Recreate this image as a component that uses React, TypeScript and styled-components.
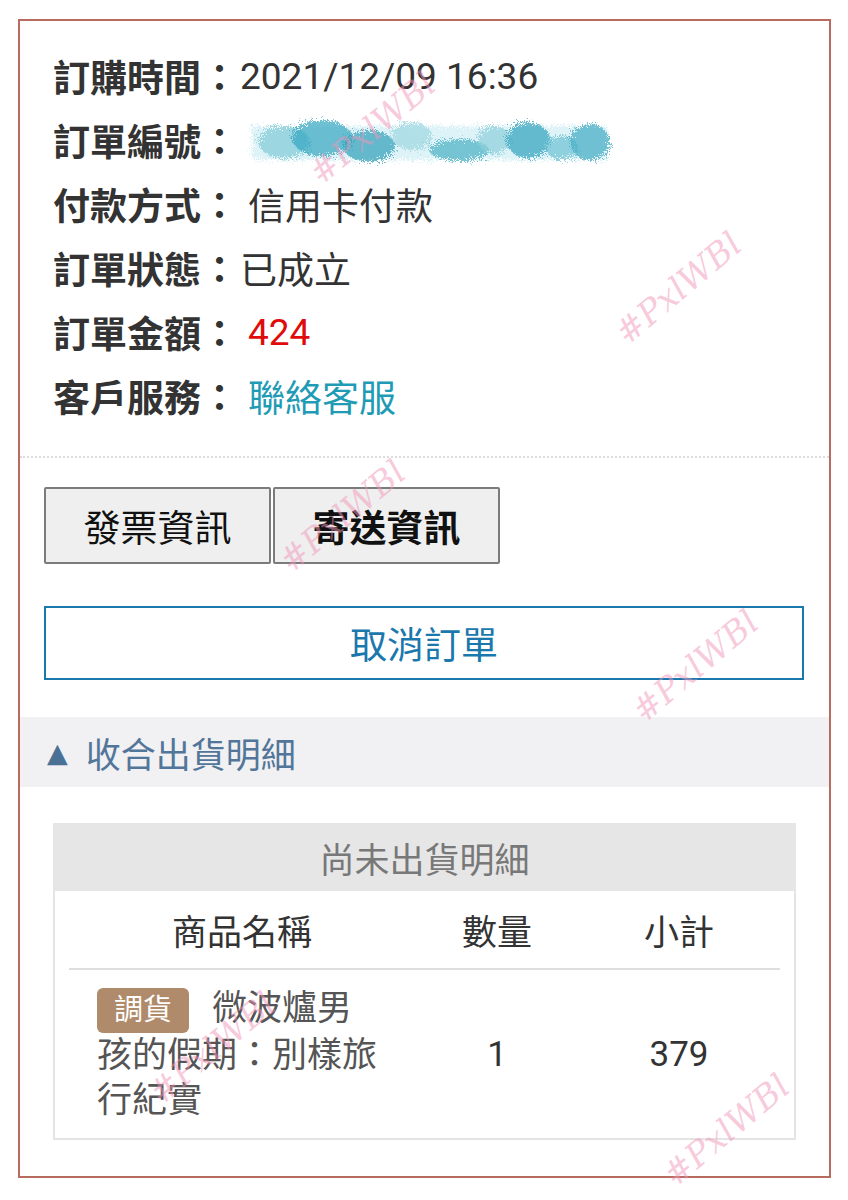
import React, { FC } from "react";
import styled, { createGlobalStyle } from "styled-components";

const GlobalStyle = createGlobalStyle`
  html, body {
    margin: 0;
    padding: 0;
    background: #ffffff;
  }
  body {
    font-family: "Roboto", "Noto Sans CJK TC", sans-serif;
    color: #333;
  }
`;

const cjk = `"Roboto", "Noto Sans CJK TC", sans-serif`;

interface InfoRow {
  label: string;
  value?: string;
  gap?: boolean;
  tone?: "plain" | "red" | "link";
  redacted?: boolean;
}

const rows: InfoRow[] = [
  { label: "訂購時間", value: "2021/12/09 16:36" },
  { label: "訂單編號", redacted: true, gap: true },
  { label: "付款方式", value: "信用卡付款", gap: true },
  { label: "訂單狀態", value: "已成立" },
  { label: "訂單金額", value: "424", gap: true, tone: "red" },
  { label: "客戶服務", value: "聯絡客服", gap: true, tone: "link" },
];

// watermark spots, page coordinates (centre)
const marks = [
  { x: 372, y: 128 },
  { x: 678, y: 288 },
  { x: 342, y: 516 },
  { x: 695, y: 666 },
  { x: 212, y: 1048 },
  { x: 726, y: 1130 },
];

// scribbled-over order number
const blobs = [
  { cx: 40, cy: 28, rx: 26, ry: 16, c: "#7fcad8" },
  { cx: 78, cy: 24, rx: 30, ry: 18, c: "#35a7c0" },
  { cx: 125, cy: 32, rx: 26, ry: 16, c: "#2e9fb9" },
  { cx: 168, cy: 22, rx: 20, ry: 14, c: "#9ed7e2" },
  { cx: 215, cy: 36, rx: 30, ry: 11, c: "#48b0c5" },
  { cx: 250, cy: 26, rx: 16, ry: 14, c: "#8dd0dd" },
  { cx: 284, cy: 26, rx: 22, ry: 18, c: "#2fa3bd" },
  { cx: 318, cy: 34, rx: 16, ry: 12, c: "#6cc2d3" },
  { cx: 346, cy: 28, rx: 20, ry: 18, c: "#3eabc3" },
];

const Redacted: FC = () => (
  <svg width="372" height="56" viewBox="0 0 372 56">
    <defs>
      <filter id="scrub" x="-10%" y="-40%" width="120%" height="180%">
        <feTurbulence type="fractalNoise" baseFrequency="1.4" numOctaves="3" result="n" />
        <feDisplacementMap in="SourceGraphic" in2="n" scale="16" />
      </filter>
    </defs>
    <g filter="url(#scrub)">
      <rect x="8" y="12" width="356" height="34" fill="#d6f0f5" opacity="0.8" />
      {blobs.map((b, i) => (
        <ellipse key={i} cx={b.cx} cy={b.cy} rx={b.rx} ry={b.ry} fill={b.c} opacity="0.7" />
      ))}
    </g>
  </svg>
);

export default function App() {
  return (
    <>
      <GlobalStyle />
      <Page>
        <Card>
          <InfoList>
            {rows.map((r) => (
              <Row key={r.label}>
                <Label>{r.label}：</Label>
                {r.redacted ? (
                  <RedactWrap $gap={!!r.gap}>
                    <Redacted />
                  </RedactWrap>
                ) : (
                  <Value $gap={!!r.gap} $tone={r.tone || "plain"}>
                    {r.value}
                  </Value>
                )}
              </Row>
            ))}
          </InfoList>

          <Actions>
            <TabRow>
              <TabButton>發票資訊</TabButton>
              <TabButton $bold>寄送資訊</TabButton>
            </TabRow>
            <CancelButton>取消訂單</CancelButton>
          </Actions>

          <CollapseBar>
            <Arrow>▲</Arrow>
            <span>收合出貨明細</span>
          </CollapseBar>

          <ShipTable>
            <ShipTitle>尚未出貨明細</ShipTitle>
            <ColHead>
              <Cell>商品名稱</Cell>
              <Cell>數量</Cell>
              <Cell>小計</Cell>
            </ColHead>
            <ItemRow>
              <NameCell>
                <NameText>
                  <Badge>調貨</Badge>
                  微波爐男孩的假期：別樣旅行紀實
                </NameText>
              </NameCell>
              <Cell>1</Cell>
              <Cell>379</Cell>
            </ItemRow>
          </ShipTable>
        </Card>

        {marks.map((m, i) => (
          <Watermark key={i} style={{ left: m.x, top: m.y }} aria-hidden="true">
            #PxlWBl
          </Watermark>
        ))}
      </Page>
    </>
  );
}

const Page = styled.div`
  position: relative;
  width: 848px;
  height: 1200px;
  padding: 19px 17px 0 18px;
  box-sizing: border-box;
`;

const Card = styled.div`
  border: 2px solid #b86b5f;
  background: #fff;
  padding: 0 0 36px;
  display: flex;
  flex-direction: column;
`;

const InfoList = styled.div`
  padding: 23px 0 28px 33px;
  border-bottom: 2px dotted #dcdcdc;
  display: flex;
  flex-direction: column;
`;

const Row = styled.div`
  display: flex;
  align-items: center;
  height: 64px;
  font-family: ${cjk};
  font-size: 37px;
`;

const Label = styled.span`
  font-weight: 700;
  color: #333;
`;

const Value = styled.span<{ $gap: boolean; $tone: "plain" | "red" | "link" }>`
  margin-left: ${(p) => (p.$gap ? "10px" : "2px")};
  color: ${(p) => (p.$tone === "red" ? "#e00b0b" : p.$tone === "link" ? "#1f9bb6" : "#333")};
`;

const RedactWrap = styled.span<{ $gap: boolean }>`
  display: flex;
  margin-left: ${(p) => (p.$gap ? "6px" : "0")};
  margin-top: 4px;
`;

const Actions = styled.div`
  padding: 29px 24px 0;
  display: flex;
  flex-direction: column;
  gap: 42px;
`;

const TabRow = styled.div`
  display: flex;
  gap: 2px;
`;

const TabButton = styled.button<{ $bold?: boolean }>`
  width: 227px;
  height: 77px;
  background: #efefef;
  border: 2px solid #7b7b7b;
  border-radius: 2px;
  font-family: ${cjk};
  font-size: 37px;
  font-weight: ${(p) => (p.$bold ? 700 : 400)};
  color: #111;
  padding: 0;
`;

const CancelButton = styled.button`
  width: 760px;
  height: 74px;
  background: #fff;
  border: 2px solid #1b78ad;
  font-family: ${cjk};
  font-size: 37px;
  color: #1b78ad;
  padding: 0;
`;

const CollapseBar = styled.div`
  margin-top: 37px;
  height: 70px;
  background: #f1f0f2;
  display: flex;
  align-items: center;
  padding-left: 27px;
  font-family: ${cjk};
  font-size: 35px;
  color: #52769a;
`;

const Arrow = styled.span`
  font-size: 27px;
  margin-right: 18px;
  color: #4a7096;
  font-family: "DejaVu Sans", sans-serif;
`;

const ShipTable = styled.div`
  margin: 36px 33px 0;
  border: 2px solid #e4e4e4;
  border-top: none;
  font-family: ${cjk};
  font-size: 35px;
`;

const ShipTitle = styled.div`
  height: 68px;
  margin: 0 -2px;
  background: #e6e6e6;
  color: #787878;
  display: flex;
  align-items: center;
  justify-content: center;
`;

const grid = `
  display: grid;
  grid-template-columns: 346px 164px 200px;
  margin: 0 14px;
`;

const ColHead = styled.div`
  ${grid};
  height: 77px;
  align-items: center;
  color: #333;
  border-bottom: 2px solid #dedede;
`;

const ItemRow = styled.div`
  ${grid};
  padding: 16px 0 15px;
  align-items: center;
  color: #333;
`;

const Cell = styled.div`
  text-align: center;
`;

const NameCell = styled.div`
  padding-left: 28px;
`;

const NameText = styled.div`
  width: 286px;
  line-height: 45px;
  color: #555;
`;

const Badge = styled.span`
  display: inline-block;
  vertical-align: top;
  margin-top: 2px;
  height: 45px;
  line-height: 45px;
  padding: 0 17px;
  margin-right: 23px;
  background: #b08b6b;
  color: #fff;
  font-size: 29px;
  border-radius: 6px;
`;

const Watermark = styled.span`
  position: absolute;
  transform: translate(-50%, -50%) rotate(-40deg);
  font-family: "DejaVu Serif", serif;
  font-style: italic;
  font-size: 34px;
  color: rgba(240, 150, 185, 0.5);
  pointer-events: none;
  user-select: none;
  white-space: nowrap;
`;
